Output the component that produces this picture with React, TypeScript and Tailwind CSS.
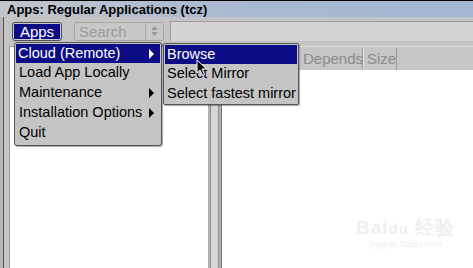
import React from "react";

const font = { fontFamily: '"Liberation Sans", Arial, sans-serif' };

function Arrow({ white }: { white?: boolean }) {
  return (
    <svg width="7" height="10" viewBox="0 0 7 10" className="shrink-0">
      <path d="M1 0 L6 5 L1 10 Z" fill={white ? "#ffffff" : "#000000"} />
    </svg>
  );
}

export default function App() {
  return (
    <div className="relative w-[473px] h-[268px] overflow-hidden bg-[#c4c4c4] text-black whitespace-nowrap" style={font}>
      {/* title bar */}
      <div className="h-[17px] border-t border-black bg-gradient-to-r from-[#c2c6cc] via-[#a9b9d0] to-[#a2b6d2] flex items-center pl-[7px]">
        <span className="text-[13px] font-bold leading-none">Apps: Regular Applications (tcz)</span>
      </div>
      <div className="flex h-[251px]">
        {/* left window edge */}
        <div className="w-[4px] bg-[#b8b8b8] border-r border-[#505050]" />
        <div className="flex-1 flex flex-col">
          {/* toolbar */}
          <div className="h-[27px] flex items-center pl-[8px] pt-[1px] gap-[12px]">
            <div className="w-[50px] h-[19px] rounded-[3px] border border-[#505050] bg-[#c8c8c8] p-[1px]">
              <div className="w-full h-full bg-[#0c0c86] text-white text-[15px] leading-[15px] flex items-center justify-center">Apps</div>
            </div>
            <div className="w-[90px] h-[19px] rounded-[2px] border border-[#a8a8a8] bg-[#c8c8c8] flex items-center">
              <span className="flex-1 pl-[4px] text-[15px] leading-none text-[#9a9a9a]">Search</span>
              <div className="w-[18px] h-full border-l border-[#a8a8a8] flex flex-col items-center justify-center gap-[2px]">
                <svg width="7" height="4" viewBox="0 0 7 4"><path d="M0 4 L3.5 0 L7 4 Z" fill="#9a9a9a" /></svg>
                <svg width="7" height="4" viewBox="0 0 7 4"><path d="M0 0 L3.5 4 L7 0 Z" fill="#9a9a9a" /></svg>
              </div>
            </div>
            <div className="flex-1 h-[20px] -ml-[6px] border-l border-t border-[#9c9c9c] bg-[#d4d4d4]" />
          </div>
          {/* main area */}
          <div className="flex-1 flex pt-[2px]">
            <div className="w-[5px]" />
            <div className="w-[199px] bg-white border-l border-t border-[#9a9a9a]" />
            {/* divider */}
            <div className="w-[13px] flex">
              <div className="w-[2px] bg-[#b0b0b0]" />
              <div className="w-[1px] bg-[#909090]" />
              <div className="flex-1 bg-[#d6d6d6]" />
              <div className="w-[1px] bg-[#909090]" />
              <div className="w-[2px] bg-[#b0b0b0]" />
            </div>
            <div className="flex-1 flex flex-col bg-white border-l border-[#7a7a7a]">
              <div className="h-[24px] bg-[#c6c6c6] border-t border-[#e0e0e0] flex items-stretch pt-[1px]">
                <div className="w-[77px] border-r border-[#9a9a9a]" />
                <div className="w-[64px] border-r border-[#9a9a9a] border-l border-l-[#e4e4e4] flex items-center pl-[3px] text-[15px] text-[#8c8c8c]">Depends</div>
                <div className="w-[34px] border-r border-[#9a9a9a] border-l border-l-[#e4e4e4] flex items-center pl-[3px] text-[15px] text-[#8c8c8c]">Size</div>
                <div className="flex-1" />
              </div>
              <div className="flex-1 bg-white" />
            </div>
          </div>
        </div>
      </div>

      {/* main dropdown menu */}
      <div className="absolute left-[14px] top-[42px] w-[148px] h-[104px] rounded-[3px] border border-[#555] bg-[#c4c4c4] shadow-[1px_1px_1px_rgba(0,0,0,0.35)] p-[1px] text-[14.5px]">
        <div className="h-[19px] bg-[#0c0c86] text-white flex items-center justify-between pl-[2px] pr-[5px]">
          <span>Cloud (Remote)</span>
          <Arrow white />
        </div>
        <div className="h-[20px] flex items-center pl-[3px]">Load App Locally</div>
        <div className="h-[20px] flex items-center justify-between pl-[3px] pr-[5px]">
          <span>Maintenance</span>
          <Arrow />
        </div>
        <div className="h-[20px] flex items-center justify-between pl-[3px] pr-[5px]">
          <span>Installation Options</span>
          <Arrow />
        </div>
        <div className="h-[20px] flex items-center pl-[3px]">Quit</div>
      </div>

      {/* submenu */}
      <div className="absolute left-[163px] top-[43px] w-[136px] h-[62px] rounded-[2px] border border-[#555] bg-[#c4c4c4] shadow-[1px_1px_1px_rgba(0,0,0,0.35)] p-[1px] text-[14.5px]">
        <div className="h-[19px] bg-[#0c0c86] text-white flex items-center pl-[2px]">Browse</div>
        <div className="h-[20px] flex items-center pl-[2px]">Select Mirror</div>
        <div className="h-[20px] flex items-center pl-[2px]">Select fastest mirror</div>
      </div>

      {/* mouse cursor */}
      <svg className="absolute left-[196px] top-[59px]" width="12" height="18" viewBox="0 0 12 18">
        <path d="M1 1 L1 14 L4 11 L6.5 16.5 L8.5 15.5 L6 10 L10.5 10 Z" fill="#000" stroke="#fff" strokeWidth="1" />
      </svg>

      {/* watermark */}
      <div className="absolute left-[356px] top-[218px] flex flex-col items-center text-[#efefef] leading-none">
        <span className="text-[19px] font-bold tracking-[1px]">Bai<span className="text-[15px]">du</span> 经验</span>
        <span className="text-[9px] mt-[3px]">jingyan.baidu.com</span>
      </div>
    </div>
  );
}
